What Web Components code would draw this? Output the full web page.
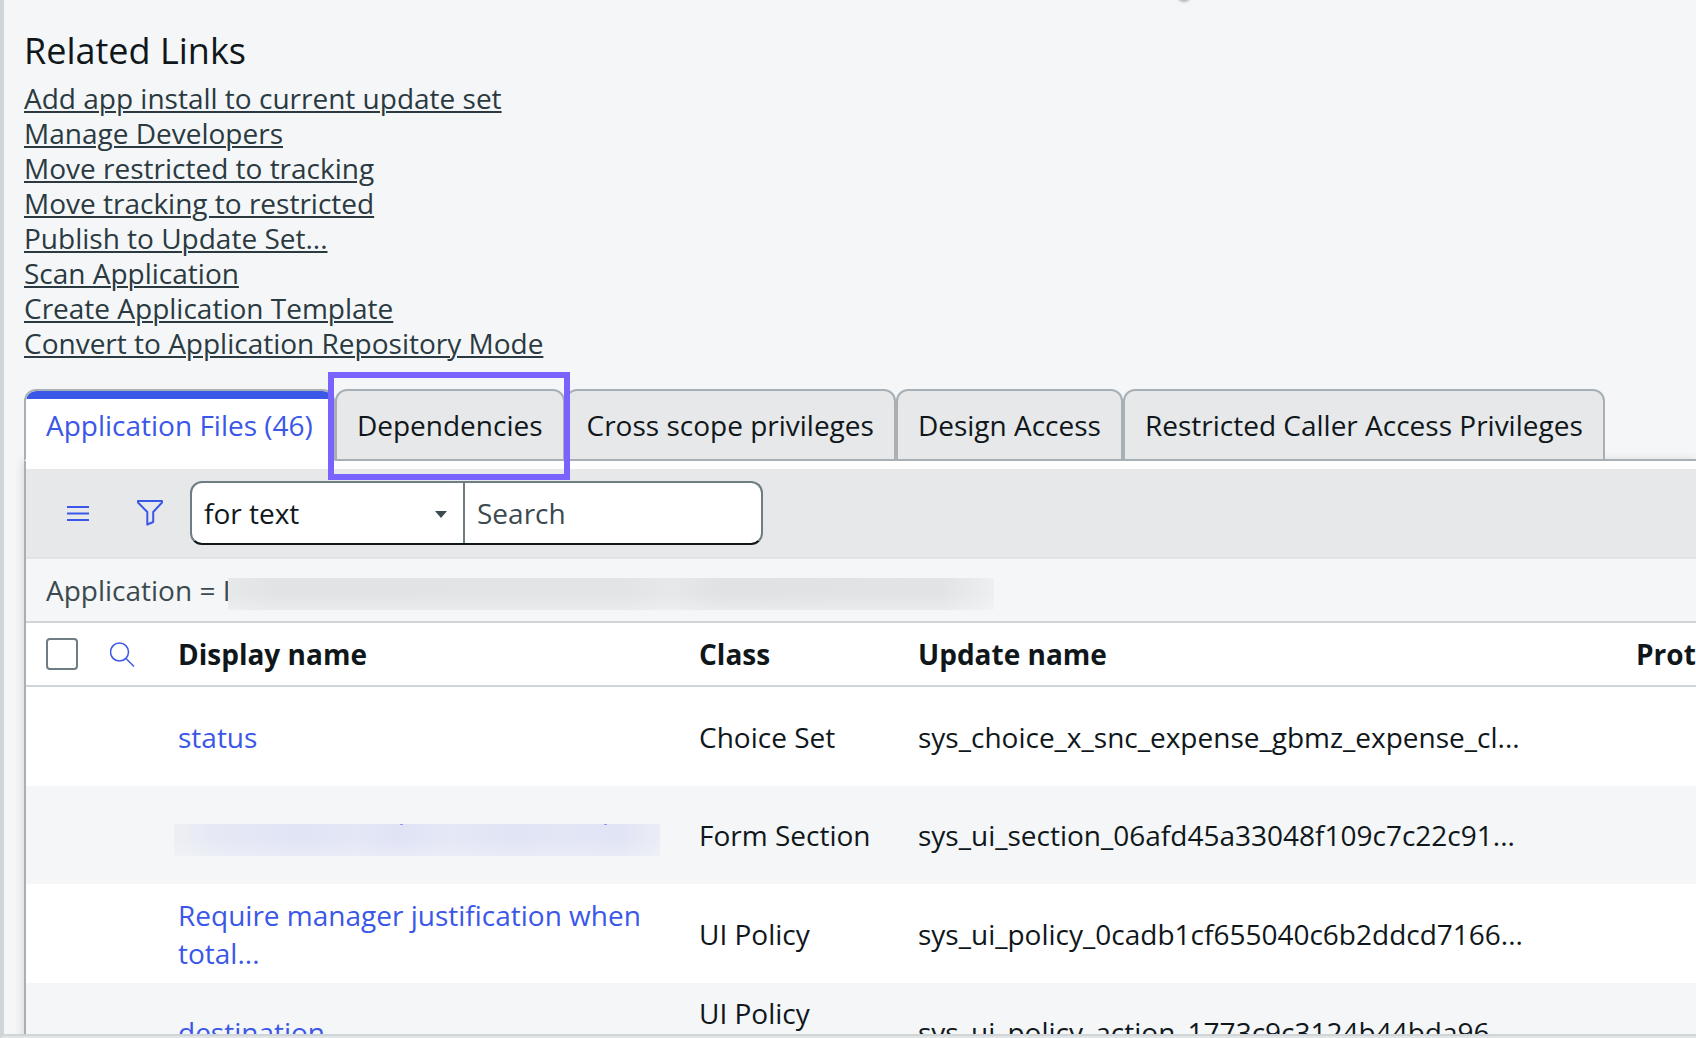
<!DOCTYPE html>
<html lang="en">
<head>
<meta charset="utf-8">
<title>Custom Application</title>
<style>
  :root {
    --color-text: #10171b;
    --color-muted: #3c4a50;
    --color-link: #2b3a41;
    --color-primary: #3b57e8;
    --color-page: #f4f6f8;
    --color-chrome: #e6e8ea;
    --color-border: #a8b0b6;
    --color-divider: #cfd5d8;
    --color-field: #6e7c83;
    --color-highlight: #7863ff;
  }

  body {
    margin: 0;
    font: 28px/38px "Open Sans", "Noto Sans", sans-serif;
    color: var(--color-text);
    background: var(--color-page);
  }
</style>
</head>
<body>

<app-frame>
  <related-links heading="Related Links">
    <a href="#add">Add app install to current update set</a>
    <a href="#developers">Manage Developers</a>
    <a href="#to-tracking">Move restricted to tracking</a>
    <a href="#to-restricted">Move tracking to restricted</a>
    <a href="#publish">Publish to Update Set...</a>
    <a href="#scan">Scan Application</a>
    <a href="#template">Create Application Template</a>
    <a href="#convert">Convert to Application Repository Mode</a>
  </related-links>

  <tab-strip>
    <tab-item active>Application Files (46)</tab-item>
    <tab-item highlight>Dependencies</tab-item>
    <tab-item>Cross scope privileges</tab-item>
    <tab-item>Design Access</tab-item>
    <tab-item>Restricted Caller Access Privileges</tab-item>
  </tab-strip>

  <list-panel>
    <list-toolbar></list-toolbar>
    <list-filter>Application = I</list-filter>
    <record-list></record-list>
  </list-panel>
</app-frame>

<script>
/** Attaches an open shadow root holding the given styles and markup. */
function attach(host, styles, markup) {
  host.attachShadow({ mode: 'open' }).innerHTML = `<style>${styles}</style>${markup}`;
}

/** Outer window: left and bottom edges, clips whatever scrolls below. */
class AppFrame extends HTMLElement {
  constructor() {
    super();
    attach(this, `
      :host {
        display: block;
        position: relative;
        box-sizing: border-box;
        height: 100vh;
        overflow: hidden;
        border-left: 4px solid var(--color-divider);
        border-bottom: 2px solid #e1e5e6;
        background: var(--color-page);
      }
      main {
        box-sizing: border-box;
        height: 100%;
        overflow: hidden;
        padding: 26px 0 0 20px;
        border-bottom: 2px solid var(--color-divider);
      }
      .knob {
        position: absolute;
        top: -6px;
        left: 1174px;
        width: 12px;
        height: 8px;
        border-radius: 50%;
        background: #b5b8bb;
        filter: blur(1px);
      }
    `, `
      <div class="knob"></div>
      <main><slot></slot></main>
    `);
  }
}

/** Heading with a stacked list of links. */
class RelatedLinks extends HTMLElement {
  constructor() {
    super();
    attach(this, `
      :host { display: block; margin-bottom: 28px; }
      h2 {
        margin: 0 0 5px;
        font-size: 36px;
        line-height: 50px;
        font-weight: 400;
      }
      nav {
        display: flex;
        flex-direction: column;
        align-items: flex-start;
        line-height: 35px;
      }
      ::slotted(a) {
        color: var(--color-link);
        text-decoration: underline;
        text-decoration-thickness: 2px;
        text-underline-offset: 2px;
      }
    `, `
      <h2></h2>
      <nav><slot></slot></nav>
    `);
  }

  connectedCallback() {
    this.shadowRoot.querySelector('h2').textContent = this.getAttribute('heading');
  }
}

class TabStrip extends HTMLElement {
  constructor() {
    super();
    attach(this, `
      :host { display: block; margin-bottom: -2px; }
      div { display: flex; }
    `, `<div role="tablist"><slot></slot></div>`);
  }
}

/** One tab. "active" joins it to the panel, "highlight" draws a callout box. */
class TabItem extends HTMLElement {
  constructor() {
    super();
    attach(this, `
      :host { display: block; position: relative; }
      :host([active]) { z-index: 1; }
      :host([highlight]) { z-index: 2; }
      button {
        display: block;
        height: 72px;
        padding: 0 20px;
        border: 2px solid var(--color-border);
        border-radius: 12px 12px 0 0;
        background: var(--color-chrome);
        color: var(--color-text);
        font: inherit;
        white-space: nowrap;
        cursor: pointer;
      }
      :host([active]) button {
        border-bottom-color: #fff;
        background: linear-gradient(var(--color-primary) 8px, #fff 8px) padding-box;
        color: var(--color-primary);
      }
      :host([highlight])::after {
        content: "";
        position: absolute;
        inset: -17px -5px -19px -7px;
        border: 6px solid var(--color-highlight);
        pointer-events: none;
      }
    `, `<button type="button" role="tab"><slot></slot></button>`);
  }

  connectedCallback() {
    this.shadowRoot.querySelector('button')
      .setAttribute('aria-selected', String(this.hasAttribute('active')));
  }
}

class ListPanel extends HTMLElement {
  constructor() {
    super();
    attach(this, `
      :host {
        display: block;
        padding-top: 8px;
        border: solid var(--color-border);
        border-width: 2px 0 0 2px;
        background: #fff;
        box-shadow: 0 2px 10px rgba(0, 0, 0, 0.15);
      }
    `, `<slot></slot>`);
  }
}

/** Menu, filter toggle and the search field with its scope drop-down. */
class ListToolbar extends HTMLElement {
  constructor() {
    super();
    attach(this, `
      :host {
        display: flex;
        align-items: center;
        box-sizing: border-box;
        height: 90px;
        padding: 0 16px;
        border-bottom: 2px solid #e1e3e5;
        background: var(--color-chrome);
      }
      button {
        display: grid;
        place-items: center;
        width: 72px;
        height: 64px;
        padding: 0;
        border: 0;
        background: none;
        color: var(--color-primary);
        cursor: pointer;
      }
      svg { fill: none; stroke: currentColor; stroke-width: 2; }
      .search {
        display: flex;
        box-sizing: border-box;
        height: 64px;
        margin-left: 4px;
        border: 2px solid var(--color-field);
        border-bottom-color: var(--color-text);
        border-radius: 12px;
        background: #fff;
      }
      .scope { position: relative; }
      .scope::after {
        content: "";
        position: absolute;
        top: 28px;
        right: 18px;
        border: solid transparent;
        border-width: 7px 6px 0;
        border-top-color: var(--color-muted);
        pointer-events: none;
      }
      select, input {
        box-sizing: border-box;
        height: 60px;
        margin: 0;
        padding: 0 12px;
        border: 0;
        outline: 0;
        background: none;
        color: var(--color-text);
        font: inherit;
      }
      select {
        width: 273px;
        appearance: none;
        border-right: 2px solid var(--color-field);
        border-radius: 0;
      }
      input { width: 296px; }
      input::placeholder { color: var(--color-muted); opacity: 1; }
    `, `
      <button type="button" aria-label="List controls">
        <svg width="22" height="16" viewBox="0 0 22 16"><path d="M0 2h22M0 8.500h22M0 15h22"/></svg>
      </button>
      <button type="button" aria-label="Show filter">
        <svg width="28" height="28" viewBox="0 0 28 28" stroke-linejoin="round">
          <path d="M2 2h24v1.500L17.200 13v10L11.300 25.500V13L2 3.500z"/>
        </svg>
      </button>
      <div class="search">
        <div class="scope">
          <select aria-label="Search scope"><option>for text</option></select>
        </div>
        <input type="text" placeholder="Search" aria-label="Search">
      </div>
    `);
  }
}

/** Breadcrumb of the current filter, its value is masked. */
class ListFilter extends HTMLElement {
  constructor() {
    super();
    attach(this, `
      :host {
        display: flex;
        height: 62px;
        align-items: center;
        padding-left: 20px;
        border-bottom: 2px solid var(--color-divider);
        background: var(--color-page);
        color: var(--color-muted);
      }
      .text { width: 182px; overflow: hidden; white-space: nowrap; }
      .mask {
        width: 766px;
        height: 32px;
        margin-top: 8px;
        background:
          linear-gradient(transparent 50%, rgba(244, 246, 248, 0.4)),
          linear-gradient(90deg, #e7e8ea, #e1e3e4 6%, #e2e4e5 52%, #e7e8ea 58%, #e0e2e3 64%, #e1e3e4 93%, #eeeff1);
      }
    `, `
      <span class="text"><slot></slot></span>
      <span class="mask"></span>
    `);
  }
}

const RECORDS = [
  { name: 'status', type: 'Choice Set', update: 'sys_choice_x_snc_expense_gbmz_expense_cl...' },
  { name: null, type: 'Form Section', update: 'sys_ui_section_06afd45a33048f109c7c22c91...' },
  { name: 'Require manager justification when total...', type: 'UI Policy', update: 'sys_ui_policy_0cadb1cf655040c6b2ddcd7166...' },
  { name: 'destination', type: 'UI Policy Action', update: 'sys_ui_policy_action_1773c9c3124b44bda96...' }
];

/** Table of application files. A record without a name shows a mask. */
class RecordList extends HTMLElement {
  constructor() {
    super();
    attach(this, `
      :host { display: block; }
      table {
        width: 100%;
        table-layout: fixed;
        border-spacing: 0;
      }
      .check { width: 74px; }
      .find { width: 68px; }
      .name { width: 521px; }
      .type { width: 219px; }
      .protection { width: 70px; }
      th, td {
        box-sizing: border-box;
        padding: 0 0 0 10px;
        text-align: left;
        white-space: nowrap;
      }
      th {
        height: 64px;
        border-bottom: 2px solid var(--color-divider);
        font-weight: 700;
      }
      th:first-child { padding-left: 20px; }
      td { height: 99px; }
      td:nth-child(3), td:nth-child(4) { padding-right: 12px; white-space: normal; }
      tbody tr:nth-child(even) { background: var(--color-page); }
      tbody tr:nth-child(even) td { height: 98px; }
      a { color: var(--color-primary); text-decoration: none; }
      input {
        display: block;
        appearance: none;
        box-sizing: border-box;
        width: 32px;
        height: 32px;
        margin: 0;
        border: 2px solid var(--color-field);
        border-radius: 4px;
        background: #fff;
      }
      button {
        display: block;
        padding: 0;
        border: 0;
        background: none;
        color: var(--color-primary);
        cursor: pointer;
      }
      svg { display: block; fill: none; stroke: currentColor; stroke-width: 1.500; }
      .mask {
        display: block;
        width: 486px;
        height: 32px;
        margin: 10px 0 0 -4px;
        background:
          linear-gradient(transparent 50%, rgba(244, 246, 248, 0.4)),
          linear-gradient(90deg, #eeeff5, #e6e9f4 8%, #e1e4f5 26%, #e4e7f5 38%, #e0e3f5 46%, #e5e8f5 57%, #e1e4f5 70%, #e3e6f5 80%, #e1e4f5 92%, #ebedf5);
      }
      /* tips of two tall letters above the mask */
      .mask::before {
        content: "";
        display: block;
        width: 3px;
        height: 1px;
        margin-left: 226px;
        background: #8f9ee8;
        box-shadow: 204px 0 #8f9ee8;
      }
    `, `
      <table>
        <thead>
          <tr>
            <th class="check" scope="col"><input type="checkbox" aria-label="Select all"></th>
            <th class="find" scope="col">
              <button type="button" aria-label="Show column search">
                <svg width="26" height="28" viewBox="0 0 26 28"><circle cx="9.500" cy="12" r="9"/><path d="M16 18.500l8 8"/></svg>
              </button>
            </th>
            <th class="name" scope="col">Display name</th>
            <th class="type" scope="col">Class</th>
            <th scope="col">Update name</th>
            <th class="protection" scope="col">Prot</th>
          </tr>
        </thead>
        <tbody>${RECORDS.map(RecordList.row).join('')}</tbody>
      </table>
    `);
  }

  static row({ name, type, update }) {
    const label = name ? `<a href="#record">${name}</a>` : '<span class="mask"></span>';
    return `
      <tr>
        <td></td>
        <td></td>
        <td>${label}</td>
        <td>${type}</td>
        <td>${update}</td>
        <td></td>
      </tr>`;
  }
}

customElements.define('app-frame', AppFrame);
customElements.define('related-links', RelatedLinks);
customElements.define('tab-strip', TabStrip);
customElements.define('tab-item', TabItem);
customElements.define('list-panel', ListPanel);
customElements.define('list-toolbar', ListToolbar);
customElements.define('list-filter', ListFilter);
customElements.define('record-list', RecordList);
</script>
</body>
</html>
